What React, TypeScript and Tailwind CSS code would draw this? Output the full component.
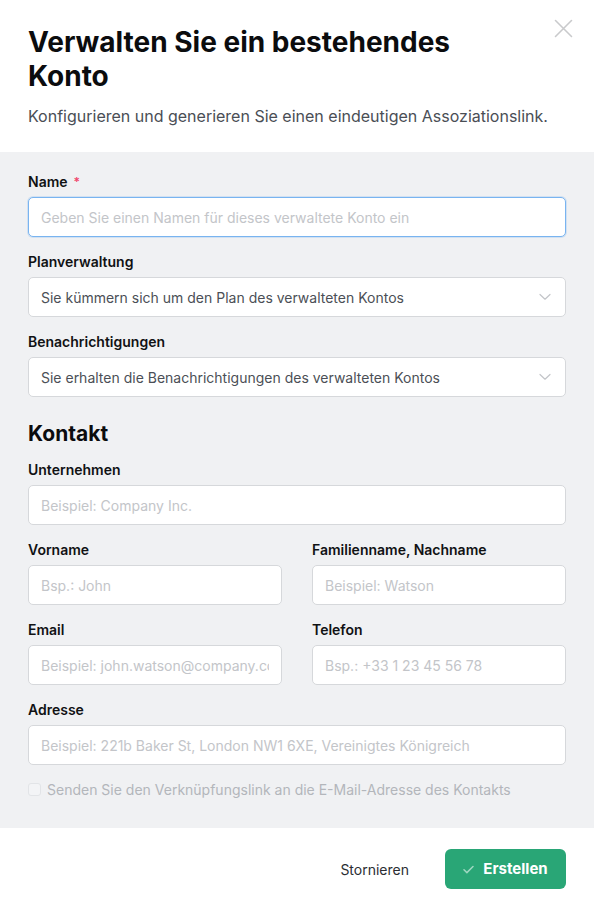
import React from "react";

const font = { fontFamily: "Inter, 'Noto Sans', sans-serif" };

function Label({ children, required }: { children: React.ReactNode; required?: boolean }) {
  return (
    <div className="flex h-5 items-center text-[14px] font-semibold leading-5 text-[#111214]">
      {children}
      {required && <span className="ml-[6px] text-[12px] text-[#f0466b]">*</span>}
    </div>
  );
}

function TextInput({ placeholder, focused }: { placeholder: string; focused?: boolean }) {
  return (
    <input
      readOnly
      placeholder={placeholder}
      className={
        "mt-[5px] block h-10 w-full rounded-[5px] border bg-white px-3 text-[14px] text-[#374151] outline-none placeholder:text-[#c3c5c9] " +
        (focused ? "border-[#79b4f0] shadow-[0_0_0_1px_rgba(121,180,240,0.25)]" : "border-[#d6d8db]")
      }
      style={font}
    />
  );
}

function SelectBox({ value }: { value: string }) {
  return (
    <div className="mt-[5px] flex h-10 w-full items-center justify-between rounded-[5px] border border-[#d6d8db] bg-white pl-3 pr-[14px]">
      <span className="text-[14px] text-[#4b4f56]">{value}</span>
      <svg width="12" height="8" viewBox="0 0 12 8" fill="none">
        <path d="M1 1.5L6 6.2L11 1.5" stroke="#c3c5c9" strokeWidth="1.2" strokeLinecap="round" strokeLinejoin="round" />
      </svg>
    </div>
  );
}

function Field({ label, children, required }: { label: string; children: React.ReactNode; required?: boolean }) {
  return (
    <div>
      <Label required={required}>{label}</Label>
      {children}
    </div>
  );
}

export default function App() {
  return (
    <div className="w-[594px] min-h-[910px] bg-white" style={font}>
      {/* header */}
      <div className="relative px-7 pt-[25px] pb-[25px]">
        <button className="absolute right-[21px] top-[19px] p-0">
          <svg width="19" height="19" viewBox="0 0 19 19" fill="none">
            <path d="M1.5 1.5L17.5 17.5M17.5 1.5L1.5 17.5" stroke="#c9cacc" strokeWidth="1.6" strokeLinecap="round" />
          </svg>
        </button>
        <h1 className="max-w-[480px] text-[28px] font-bold leading-[34px] text-[#0b0c0e]">
          Verwalten Sie ein bestehendes Konto
        </h1>
        <p className="mt-3 text-[16px] leading-[22px] text-[#4a4e55]">
          Konfigurieren und generieren Sie einen eindeutigen Assoziationslink.
        </p>
      </div>

      {/* form body */}
      <div className="bg-[#f0f1f3] px-7 pt-5 pb-[29px]">
        <div className="flex flex-col gap-[15px]">
          <Field label="Name" required>
            <TextInput placeholder="Geben Sie einen Namen für dieses verwaltete Konto ein" focused />
          </Field>
          <Field label="Planverwaltung">
            <SelectBox value="Sie kümmern sich um den Plan des verwalteten Kontos" />
          </Field>
          <Field label="Benachrichtigungen">
            <SelectBox value="Sie erhalten die Benachrichtigungen des verwalteten Kontos" />
          </Field>
        </div>

        <h2 className="mt-[23px] text-[21px] font-bold leading-7 text-[#0b0c0e]">Kontakt</h2>

        <div className="mt-3 flex flex-col gap-[15px]">
          <Field label="Unternehmen">
            <TextInput placeholder="Beispiel: Company Inc." />
          </Field>
          <div className="grid grid-cols-2 gap-x-[30px]">
            <Field label="Vorname">
              <TextInput placeholder="Bsp.: John" />
            </Field>
            <Field label="Familienname, Nachname">
              <TextInput placeholder="Beispiel: Watson" />
            </Field>
          </div>
          <div className="grid grid-cols-2 gap-x-[30px]">
            <Field label="Email">
              <TextInput placeholder="Beispiel: john.watson@company.com" />
            </Field>
            <Field label="Telefon">
              <TextInput placeholder="Bsp.: +33 1 23 45 56 78" />
            </Field>
          </div>
          <Field label="Adresse">
            <TextInput placeholder="Beispiel: 221b Baker St, London NW1 6XE, Vereinigtes Königreich" />
          </Field>
        </div>

        <label className="mt-[14px] flex h-5 items-center gap-[6px]">
          <span className="block h-[13px] w-[13px] rounded-[3px] border border-[#e2e4e7] bg-[#f3f4f6]" />
          <span className="text-[14px] text-[#b3b6bb]">
            Senden Sie den Verknüpfungslink an die E-Mail-Adresse des Kontakts
          </span>
        </label>
      </div>

      {/* footer */}
      <div className="flex items-center justify-end gap-9 px-7 pt-[21px] pb-[22px]">
        <button className="text-[14px] text-[#2b2e33]">Stornieren</button>
        <button className="flex h-10 w-[121px] items-center justify-center gap-[9px] rounded-[6px] bg-[#29a676] text-white">
          <svg width="11" height="9" viewBox="0 0 11 9" fill="none">
            <path d="M1 4.8L3.9 7.6L10 1.5" stroke="rgba(255,255,255,0.55)" strokeWidth="1.5" strokeLinecap="round" strokeLinejoin="round" />
          </svg>
          <span className="text-[15px] font-bold">Erstellen</span>
        </button>
      </div>
    </div>
  );
}
